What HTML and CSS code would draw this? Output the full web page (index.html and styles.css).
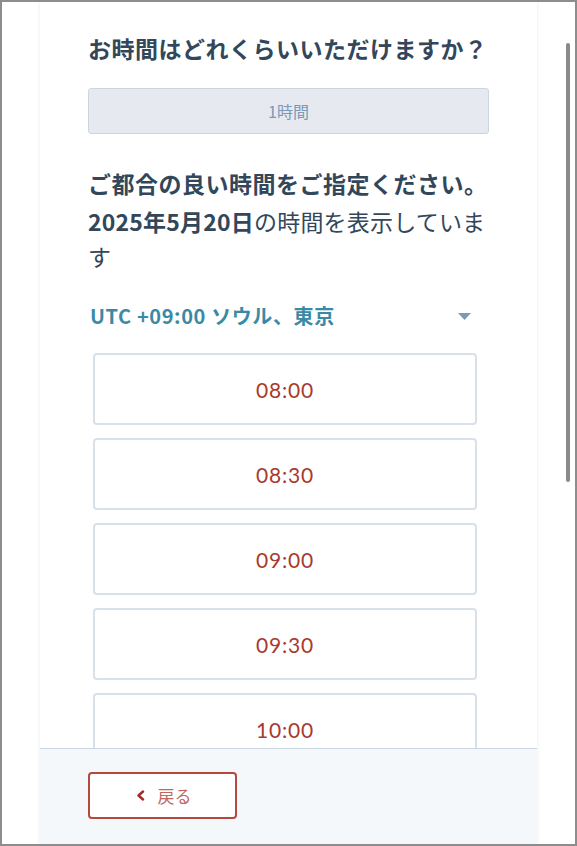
FILE: index.html
```html
<!DOCTYPE html>
<html lang="ja">
<head>
<meta charset="utf-8">
<title>ミーティング予約</title>
<link rel="stylesheet" href="styles.css">
</head>
<body>
<div class="frame">
  <div class="card">
    <div class="body">
      <h2 class="q">お時間はどれくらいいただけますか？</h2>
      <div class="duration">1時間</div>
      <h2 class="q2">ご都合の良い時間をご指定ください。</h2>
      <p class="date"><strong>2025年5月20日</strong>の時間を表示しています</p>
      <div class="tz">
        <span class="tz-label">UTC +09:00 ソウル、東京</span>
        <svg class="caret" width="13" height="7" viewBox="0 0 13 7"><polygon points="0,0 13,0 6.5,7" fill="#7c98b6"/></svg>
      </div>
      <div class="slots">
        <button class="slot">08:00</button>
        <button class="slot">08:30</button>
        <button class="slot">09:00</button>
        <button class="slot">09:30</button>
        <button class="slot">10:00</button>
      </div>
    </div>
    <div class="footer">
      <button class="back">
        <svg class="chev" width="9" height="11" viewBox="0 0 9 11"><path d="M7 1.5 L2.5 5.5 L7 9.5" fill="none" stroke="#9e2e25" stroke-width="2.4" stroke-linecap="round" stroke-linejoin="round"/></svg>
        <span>戻る</span>
      </button>
    </div>
  </div>
  <div class="thumb"></div>
</div>
</body>
</html>
```

FILE: styles.css
```css
html, body {
  margin: 0;
  padding: 0;
  background: #ffffff;
}
body {
  font-family: "Noto Sans CJK JP", "Noto Sans", sans-serif;
  color: #33475b;
}
.frame {
  position: relative;
  width: 577px;
  height: 846px;
  box-sizing: border-box;
  border: 2px solid #8d8d8d;
  background: #ffffff;
  display: flex;
  overflow: hidden;
}
.card {
  margin-left: 38px;
  width: 497px;
  height: 842px;
  display: flex;
  flex-direction: column;
  background: #ffffff;
  box-shadow: 0 0 4px rgba(0, 0, 0, 0.09);
}
.body {
  flex: 1;
  overflow: hidden;
  padding: 29px 48px 0 48px;
}
.q, .q2 {
  margin: 0;
  font-size: 23px;
  line-height: 34px;
  font-weight: 700;
  color: #33475b;
  letter-spacing: 0.5px;
}
.duration {
  margin-top: 23px;
  height: 46px;
  box-sizing: border-box;
  border: 1px solid #cbd6e2;
  border-radius: 3px;
  background: #e6eaf0;
  color: #7c98b6;
  font-size: 16px;
  display: flex;
  align-items: center;
  justify-content: center;
}
.q2 {
  margin-top: 32px;
}
.date {
  margin: 4px 0 0 0;
  font-size: 23px;
  line-height: 35px;
  font-weight: 400;
  color: #33475b;
  letter-spacing: 0.2px;
}
.date strong {
  font-weight: 700;
}
.tz {
  margin-top: 28px;
  height: 28px;
  display: flex;
  align-items: center;
  justify-content: space-between;
  padding-left: 2px;
}
.tz-label {
  font-size: 20px;
  line-height: 28px;
  font-weight: 700;
  color: #3a8aa5;
  letter-spacing: 0.6px;
}
.caret {
  margin-right: 18px;
  display: block;
}
.slots {
  margin-top: 23px;
  margin-left: 5px;
  width: 384px;
  display: flex;
  flex-direction: column;
  gap: 13px;
}
.slot {
  height: 72px;
  box-sizing: border-box;
  border: 2px solid #d8e0ea;
  border-radius: 4px;
  background: #ffffff;
  color: #a83a2e;
  font-family: "Lato", "Noto Sans", sans-serif;
  font-size: 21px;
  letter-spacing: 0.8px;
  padding: 0;
  flex-shrink: 0;
}
.footer {
  height: 96px;
  box-sizing: border-box;
  border-top: 1px solid #cbd6e2;
  background: #f5f8fa;
  padding: 23px 48px 0 48px;
}
.back {
  width: 149px;
  height: 47px;
  box-sizing: border-box;
  border: 2px solid #b4493f;
  border-radius: 4px;
  background: #ffffff;
  display: flex;
  align-items: center;
  justify-content: center;
  gap: 13px;
  padding: 0 0 0 2px;
  font-family: "Noto Sans CJK JP", sans-serif;
  font-size: 17px;
  color: #c2675f;
}
.chev {
  display: block;
}
.thumb {
  position: absolute;
  left: 564px;
  top: 41px;
  width: 4px;
  height: 439px;
  border-radius: 2px;
  background: #8a8a8a;
}
```
